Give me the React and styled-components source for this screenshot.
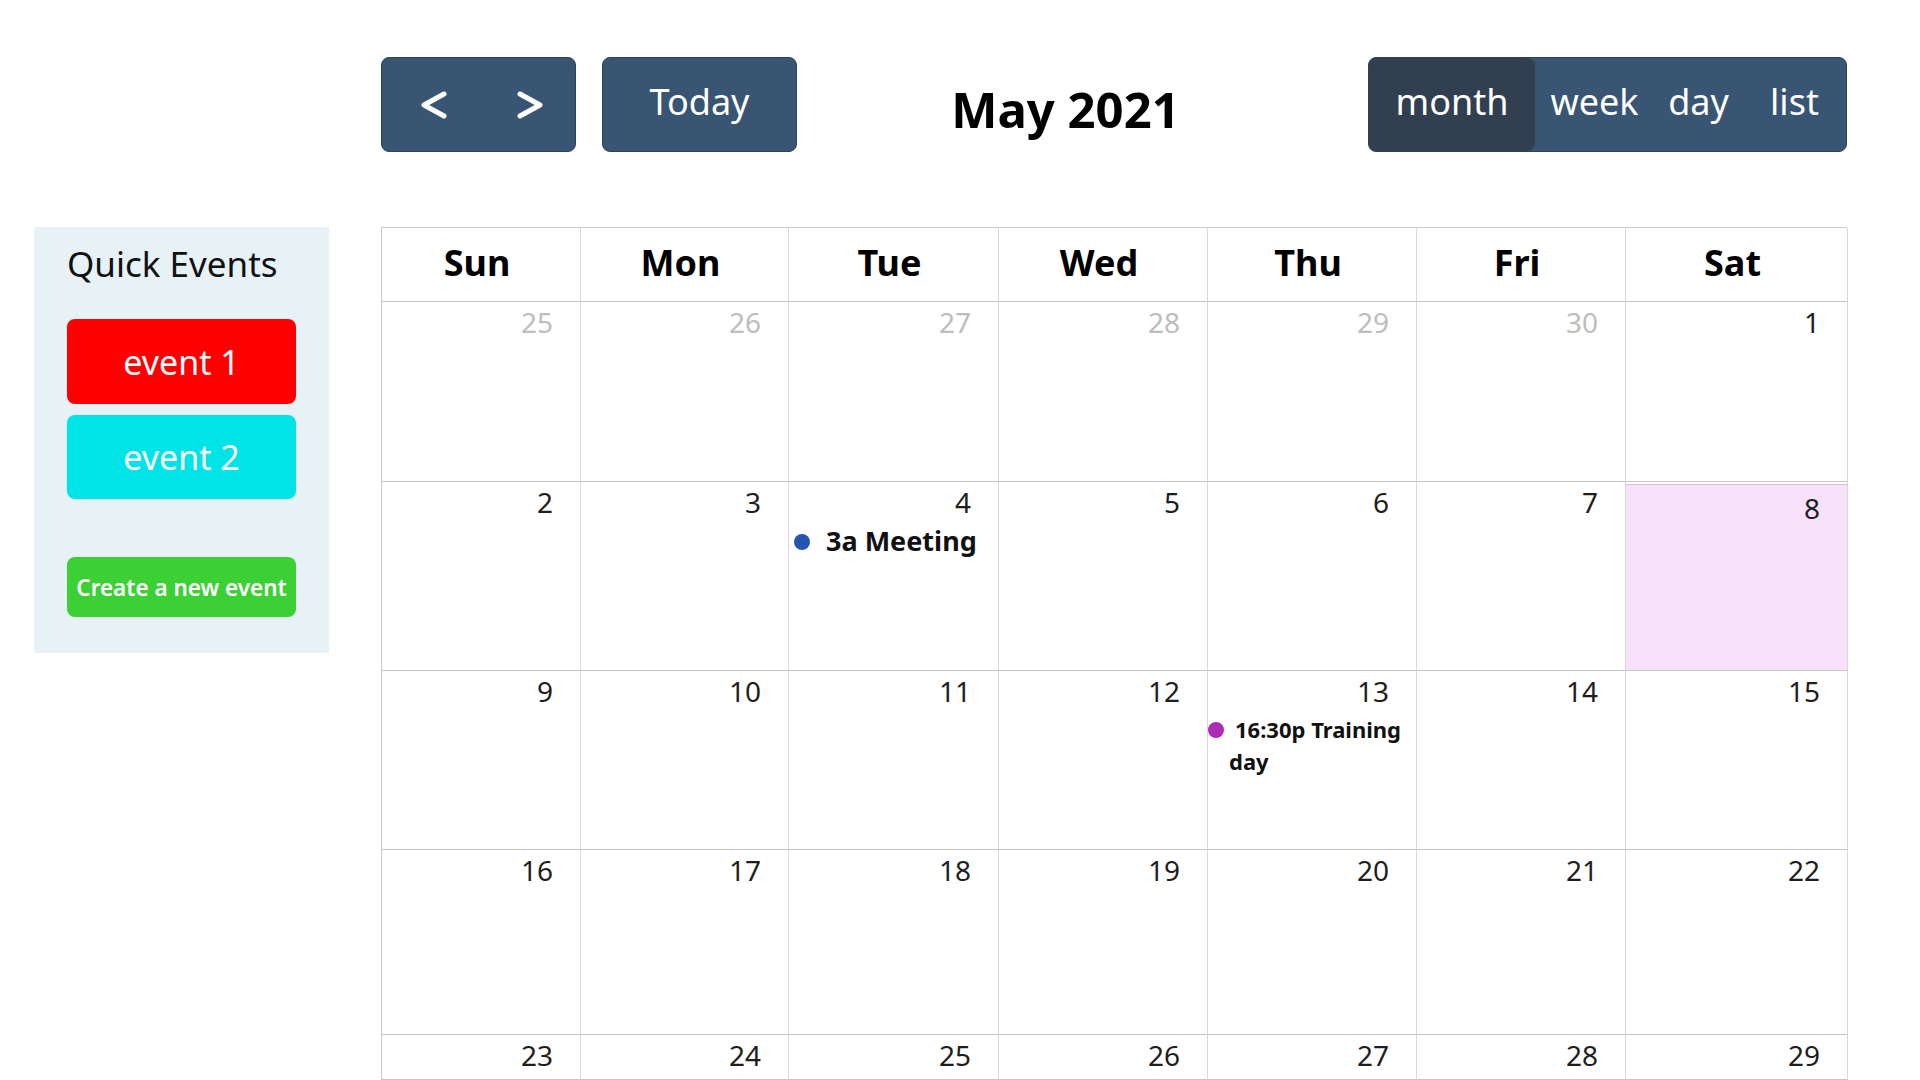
import React from "react";
import styled, { createGlobalStyle } from "styled-components";

const GlobalStyle = createGlobalStyle`
  html, body {
    margin: 0;
    padding: 0;
    background: #fff;
    font-family: "Noto Sans", "Open Sans", sans-serif;
    overflow: hidden;
  }
  * {
    box-sizing: border-box;
  }
`;

const Page = styled.div`
  display: flex;
  align-items: flex-start;
  gap: 52px;
  padding: 57px 73px 0 34px;
  height: 100vh;
  overflow: hidden;
`;

const Sidebar = styled.aside`
  width: 295px;
  margin-top: 170px;
  padding: 14px 33px 36px;
  background: #e7f2f7;
  display: flex;
  flex-direction: column;
`;

const SideTitle = styled.h2`
  margin: 0 0 32px 0;
  font-size: 35px;
  font-weight: 400;
  line-height: 46px;
  color: #111;
  white-space: nowrap;
`;

const QuickEvent = styled.div`
  height: ${(p) => p.$h}px;
  margin-top: ${(p) => p.$mt || 0}px;
  border-radius: 8px;
  background: ${(p) => p.$bg};
  color: #fff;
  font-size: ${(p) => p.$size || 34}px;
  font-weight: ${(p) => (p.$bold ? 600 : 400)};
  display: flex;
  align-items: center;
  justify-content: center;
  white-space: nowrap;
  cursor: pointer;
`;

const Main = styled.main`
  width: 1466px;
  display: flex;
  flex-direction: column;
`;

const Toolbar = styled.div`
  height: 95px;
  display: flex;
  align-items: center;
  justify-content: space-between;
`;

const Chunk = styled.div`
  display: flex;
  height: 100%;
  gap: 26px;
`;

const BtnGroup = styled.div`
  display: flex;
  height: 100%;
  border-radius: 8px;
  overflow: hidden;
  border: 1px solid #2f4256;
  background: #385573;
`;

const Button = styled.button`
  width: ${(p) => p.$w}px;
  height: 100%;
  border: none;
  margin: 0;
  padding: 0 0 7px;
  background: ${(p) => (p.$active ? "#313f50" : "transparent")};
  color: #fff;
  font-family: inherit;
  font-size: 36px;
  font-weight: 400;
  display: flex;
  align-items: center;
  justify-content: center;
  cursor: pointer;
  border-radius: ${(p) => (p.$active ? "0 8px 8px 0" : "0")};
`;

const IconButton = styled(Button)`
  padding: 0;
`;

const Title = styled.h1`
  margin: 8px 34px 0 0;
  font-size: 49px;
  font-weight: 700;
  color: #000;
`;

const Table = styled.div`
  margin-top: 75px;
  display: grid;
  grid-template-columns: 199px 208px 210px 209px 209px 209px 222px;
  grid-template-rows: 74px 180px 189px 179px 185px 45px;
  border-top: 1px solid #cbcbcb;
  border-left: 1px solid #cbcbcb;
`;

const HeadCell = styled.div`
  border-right: 1px solid #d8d8d8;
  border-bottom: 1px solid #c6c6c6;
  display: flex;
  align-items: center;
  justify-content: center;
  font-size: 36px;
  font-weight: 700;
  color: #000;
  padding: 0 8px 4px 0;
`;

const DayCell = styled.div`
  border-right: 1px solid #d8d8d8;
  border-bottom: 1px solid #c6c6c6;
  background: ${(p) => (p.$today ? "#f8e1fa" : "#fff")};
  box-shadow: ${(p) =>
    p.$today ? "inset 0 2px 0 #fff, inset 0 3px 0 #d3c0d3" : "none"};
`;

const DayNum = styled.div`
  text-align: right;
  padding: ${(p) => (p.$today ? "9px" : "3px")} 27px 0 0;
  font-size: 28px;
  line-height: 34px;
  color: ${(p) => (p.$other ? "#bdbdbd" : "#1e1e1e")};
`;

const EventItem = styled.div`
  margin: ${(p) => p.$mt}px 4px 0 ${(p) => p.$ml}px;
  padding-left: ${(p) => p.$indent}px;
  text-indent: -${(p) => p.$indent}px;
  font-size: ${(p) => p.$size}px;
  line-height: ${(p) => p.$lh}px;
  font-weight: 700;
  color: #111;
`;

const Dot = styled.span`
  display: inline-block;
  width: 16px;
  height: 16px;
  border-radius: 50%;
  background: ${(p) => p.$color};
  margin-right: ${(p) => p.$gap}px;
  vertical-align: ${(p) => p.$va}px;
`;

const Chevron = ({ dir }) => (
  <svg width="32" height="32" viewBox="0 0 32 32">
    <polyline
      points={dir === "left" ? "26,5 6,16 26,27" : "6,5 26,16 6,27"}
      fill="none"
      stroke="#fff"
      strokeWidth="5"
      strokeLinecap="round"
      strokeLinejoin="round"
    />
  </svg>
);

const days = ["Sun", "Mon", "Tue", "Wed", "Thu", "Fri", "Sat"];

const weeks = [
  [25, 26, 27, 28, 29, 30, 1],
  [2, 3, 4, 5, 6, 7, 8],
  [9, 10, 11, 12, 13, 14, 15],
  [16, 17, 18, 19, 20, 21, 22],
  [23, 24, 25, 26, 27, 28, 29],
];

function renderEvents(w, d) {
  if (w === 1 && d === 4) {
    return (
      <EventItem $mt={5} $ml={5} $indent={0} $size={27} $lh={34}>
        <Dot $color="#2456b0" $gap={16} $va={1} />
        3a Meeting
      </EventItem>
    );
  }
  if (w === 2 && d === 13) {
    return (
      <EventItem $mt={5} $ml={0} $indent={21} $size={22} $lh={32}>
        <Dot $color="#ae2bb8" $gap={11} $va={0} />
        16:30p Training day
      </EventItem>
    );
  }
  return null;
}

export default function App() {
  return (
    <>
      <GlobalStyle />
      <Page>
        <Sidebar>
          <SideTitle>Quick Events</SideTitle>
          <QuickEvent $h={85} $bg="#ff0000">
            event 1
          </QuickEvent>
          <QuickEvent $h={84} $mt={11} $bg="#00e4e8">
            event 2
          </QuickEvent>
          <QuickEvent $h={60} $mt={58} $bg="#3bd134" $size={22.5} $bold>
            Create a new event
          </QuickEvent>
        </Sidebar>
        <Main>
          <Toolbar>
            <Chunk>
              <BtnGroup>
                <IconButton $w={103}>
                  <Chevron dir="left" />
                </IconButton>
                <IconButton $w={90}>
                  <Chevron dir="right" />
                </IconButton>
              </BtnGroup>
              <BtnGroup>
                <Button $w={193}>Today</Button>
              </BtnGroup>
            </Chunk>
            <Title>May 2021</Title>
            <Chunk>
              <BtnGroup>
                <Button $w={166} $active>
                  month
                </Button>
                <Button $w={119}>week</Button>
                <Button $w={89}>day</Button>
                <Button $w={103}>list</Button>
              </BtnGroup>
            </Chunk>
          </Toolbar>
          <Table>
            {days.map((d) => (
              <HeadCell key={d}>{d}</HeadCell>
            ))}
            {weeks.map((week, w) =>
              week.map((d, i) => {
                const other = w === 0 && i < 6;
                const today = w === 1 && d === 8;
                return (
                  <DayCell key={`${w}-${i}`} $today={today}>
                    <DayNum $other={other} $today={today}>
                      {d}
                    </DayNum>
                    {renderEvents(w, d)}
                  </DayCell>
                );
              })
            )}
          </Table>
        </Main>
      </Page>
    </>
  );
}
